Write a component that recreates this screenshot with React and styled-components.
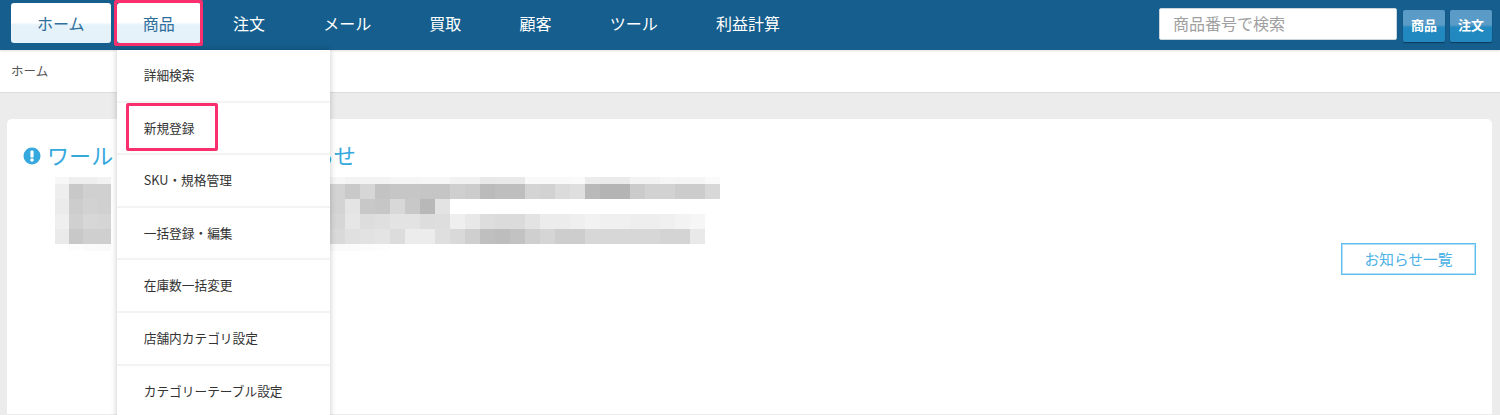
import React from 'react'
import styled, { createGlobalStyle } from 'styled-components'

const GlobalStyle = createGlobalStyle`
  html, body {
    margin: 0;
    padding: 0;
    background: #ececec;
  }
  * { box-sizing: border-box; }
`

const navItems = ['ホーム', '商品', '注文', 'メール', '買取', '顧客', 'ツール', '利益計算']

const menuItems = [
  '詳細検索',
  '新規登録',
  'SKU・規格管理',
  '一括登録・編集',
  '在庫数一括変更',
  '店舗内カテゴリ設定',
  'カテゴリーテーブル設定'
]

// the blurred-out notice text, one list of grey levels per row
const mosaicRows = [
  { height: 7, left: ['f7', 'ee', 'ee', 'f2'], right: ['f6', 'f3', 'f3', 'f3', 'f5', 'f5', 'f6', 'f6', 'f1', 'f1', 'e8', 'e9', 'e9', 'f9', 'f9', 'f9', 'fa', 'ec', 'ea', 'ea', 'f3', 'f3', 'f6', 'f5', 'f5', 'fa'] },
  { height: 15, left: ['ee', 'c8', 'd0', 'd0'], right: ['d3', 'c9', 'd6', 'c3', 'c6', 'c6', 'c5', 'c5', 'cf', 'cc', 'bb', 'be', 'be', 'd4', 'd2', 'db', 'df', 'b9', 'b4', 'b4', 'cb', 'd2', 'd2', 'cc', 'cc', 'd8'] },
  { height: 15, left: ['eb', 'cd', 'd2', 'd0'], right: ['d3', 'e4', 'c8', 'c6', 'd8', 'c8', 'b8', 'e3'] },
  { height: 15, left: ['ef', 'd0', 'd7', 'd5'], right: ['d6', 'e6', 'dd', 'df', 'e3', 'e3', 'dd', 'de', 'ef', 'e8', 'dd', 'db', 'db', 'e3', 'ec', 'ec', 'ef', 'f2', 'f0', 'f0', 'ee', 'ee', 'f0', 'f3', 'f6'] },
  { height: 15, left: ['ea', 'c8', 'cf', 'cf'], right: ['d9', 'e0', 'e2', 'e4', 'dc', 'ec', 'ec', 'df', 'd9', 'cf', 'bf', 'bd', 'c2', 'cf', 'd5', 'cd', 'cd', 'd7', 'd7', 'd7', 'd7', 'd7', 'd4', 'd4', 'e9'] },
  { height: 7, left: ['ff', 'fd', 'fb', 'fa'], right: ['fa', 'fb', 'fc', 'fd'] }
]

const App = () => (
  <Page>
    <GlobalStyle />
    <Header>
      <Nav>
        {navItems.map((label, i) => (
          <NavItem key={label} $tab={i < 2}>
            {label}
            {label === '商品' && (
              <>
                <Highlight $top={-3} $left={-3} $right={-2} $bottom={-3} />
                <Dropdown>
                  {menuItems.map(item => (
                    <DropdownItem key={item}>
                      {item}
                      {item === '新規登録' && <Highlight $top={0} $left={9} $right={112} $bottom={2} />}
                    </DropdownItem>
                  ))}
                </Dropdown>
              </>
            )}
          </NavItem>
        ))}
      </Nav>
      <SearchArea>
        <SearchInput placeholder="商品番号で検索" readOnly />
        <SearchButton>商品</SearchButton>
        <SearchButton>注文</SearchButton>
      </SearchArea>
    </Header>
    <Breadcrumb>ホーム</Breadcrumb>
    <Content>
      <Card>
        <Title>
          <svg width="18" height="18" viewBox="0 0 18 18">
            <circle cx="9" cy="9" r="8.5" fill="#35a8dd" />
            <rect x="7.4" y="3.4" width="3.2" height="7.2" rx="1.2" fill="#fff" />
            <circle cx="9" cy="13" r="1.8" fill="#fff" />
          </svg>
          <TitleText>ワールドからの重要なお知らせ</TitleText>
        </Title>
        <CardBody>
          <Mosaic>
            {mosaicRows.map((row, r) => (
              <MosaicRow key={r} $height={row.height}>
                <MosaicBlock $cell={14}>
                  {row.left.map((g, c) => <MosaicCell key={c} $grey={g} $width={14} />)}
                </MosaicBlock>
                <MosaicBlock $cell={15}>
                  {row.right.map((g, c) => <MosaicCell key={c} $grey={g} $width={15} />)}
                </MosaicBlock>
              </MosaicRow>
            ))}
          </Mosaic>
          <OutlineButton>お知らせ一覧</OutlineButton>
        </CardBody>
      </Card>
    </Content>
  </Page>
)

const fontStack = '"Noto Sans CJK JP", "Noto Sans", "Liberation Sans", sans-serif'

const Page = styled.div`
  display: flex;
  flex-direction: column;
  height: 415px;
  overflow: hidden;
  background: #ececec;
  font-family: ${fontStack};
`

const Header = styled.header`
  display: flex;
  justify-content: space-between;
  height: 50px;
  padding: 3px 8px 0 11px;
  background: #155e8d;
  box-shadow: 0 1px 2px rgba(0, 0, 0, 0.12);
  position: relative;
  z-index: 2;
`

const Nav = styled.nav`
  display: flex;
  gap: 6.2px;
  align-items: flex-start;
`

const NavItem = styled.div`
  position: relative;
  display: flex;
  align-items: center;
  height: 40px;
  padding: 0 26px 1px;
  border-radius: 3px;
  font-size: 16px;
  line-height: 1;
  white-space: nowrap;
  color: ${props => (props.$tab ? '#2f6f9b' : '#fff')};
  background: ${props => (props.$tab ? 'linear-gradient(#fff 0, #fff 48%, #e5f2fa 55%, #e5f2fa 100%)' : 'none')};
`

const Highlight = styled.span`
  position: absolute;
  top: ${props => props.$top}px;
  left: ${props => props.$left}px;
  right: ${props => props.$right}px;
  bottom: ${props => props.$bottom}px;
  border: 3px solid #fa2f6e;
  border-radius: 2px;
  pointer-events: none;
`

const Dropdown = styled.div`
  position: absolute;
  top: 47px;
  left: 0;
  width: 213px;
  background: #fff;
  box-shadow: 0 0 6px rgba(0, 0, 0, 0.22);
`

const DropdownItem = styled.div`
  position: relative;
  display: flex;
  align-items: center;
  height: 52.6px;
  padding: 0 0 0 27px;
  border-bottom: 2px solid #f3f3f3;
  font-size: 12.7px;
  color: #333;
`

const SearchArea = styled.div`
  display: flex;
  align-items: flex-start;
  gap: 5px;
  padding-top: 5px;
`

const SearchInput = styled.input`
  width: 238px;
  height: 32px;
  margin-right: 1px;
  padding: 0 13px 2px;
  border: 1px solid #c9d6df;
  border-radius: 2px;
  background: #fff;
  font-family: ${fontStack};
  font-size: 16px;
  outline: none;

  &::placeholder {
    color: #a0a0a0;
    opacity: 1;
  }
`

const SearchButton = styled.button`
  width: 42px;
  height: 32px;
  margin-top: 2px;
  padding: 0 0 4px;
  border: none;
  border-radius: 2px;
  background: linear-gradient(#5b9bc7 0, #5b9bc7 45%, #2189bf 55%, #2189bf 100%);
  box-shadow: 0 1px 1px #0c3a58;
  color: #fff;
  font-family: ${fontStack};
  font-size: 13px;
  font-weight: 700;
`

const Breadcrumb = styled.div`
  display: flex;
  align-items: center;
  height: 43px;
  padding: 0 0 2px 11px;
  background: #fff;
  border-bottom: 1px solid #dcdcdc;
  font-size: 12.5px;
  color: #555;
`

const Content = styled.main`
  display: flex;
  flex: 1;
  padding: 26px 8px 1px 7px;
`

const Card = styled.section`
  flex: 1;
  padding: 22px 16px 0 16px;
  background: #fff;
  border-radius: 5px 5px 0 0;
`

const Title = styled.h2`
  display: flex;
  align-items: center;
  gap: 6px;
  height: 30px;
  margin: 0;
  font-size: 22px;
  font-weight: 400;
  line-height: 1;
  color: #35a8dd;
`

const TitleText = styled.span`
  padding-bottom: 4px;
  letter-spacing: 0.1px;
`

const CardBody = styled.div`
  display: flex;
  justify-content: space-between;
  align-items: flex-end;
  height: 98px;
  margin-top: 6px;
  padding-left: 32px;
`

const Mosaic = styled.div`
  display: flex;
  flex-direction: column;
  align-self: flex-start;
  width: 665px;
  filter: blur(0.6px);
`

const MosaicRow = styled.div`
  display: flex;
  justify-content: space-between;
  height: ${props => props.$height}px;
`

const MosaicBlock = styled.div`
  display: flex;
  width: ${props => (props.$cell === 14 ? '56px' : '390px')};
`

const MosaicCell = styled.div`
  flex: 0 0 ${props => props.$width}px;
  background: #${props => props.$grey.repeat(3)};
`

const OutlineButton = styled.button`
  width: 135px;
  height: 32px;
  padding: 0 0 2px;
  border: 1px solid #5dbdec;
  box-shadow: inset 0 0 0 1px #b5e0f6;
  background: #fff;
  color: #4ab0e6;
  font-family: ${fontStack};
  font-size: 14.7px;
`

export default App
